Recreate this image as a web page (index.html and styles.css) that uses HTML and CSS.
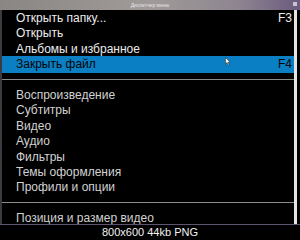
FILE: index.html
```html
<!DOCTYPE html>
<html lang="ru">
  <head>
    <meta charset="UTF-8" />
    <title>Диспетчер меню</title>
    <link rel="stylesheet" href="styles.css">
  </head>
  <body>
    <div class="window">
      <div class="titlebar">
        <span class="title">Диспетчер меню</span>
        <span class="titleBtn"></span>
      </div>
      <div class="content">
        <ul class="menu">
          <li class="item top"><span>Открыть папку...</span><span class="key">F3</span></li>
          <li class="item top"><span>Открыть</span></li>
          <li class="item top"><span>Альбомы и избранное</span></li>
          <li class="item active"><span>Закрыть файл</span><span class="key">F4</span></li>
          <li class="sep"></li>
          <li class="item"><span>Воспроизведение</span></li>
          <li class="item"><span>Субтитры</span></li>
          <li class="item"><span>Видео</span></li>
          <li class="item"><span>Аудио</span></li>
          <li class="item"><span>Фильтры</span></li>
          <li class="item"><span>Темы оформления</span></li>
          <li class="item"><span>Профили и опции</span></li>
          <li class="sep"></li>
          <li class="item"><span>Позиция и размер видео</span></li>
        </ul>
        <div class="scrollbar"></div>
      </div>
      <svg class="cursor" width="6" height="9" viewBox="0 0 6 9">
        <path d="M0.5 0.5 L0.5 7 L2 5.6 L3.2 8.2 L4.2 7.7 L3 5.2 L5.2 5.2 Z" fill="#fff" stroke="#333" stroke-width="0.6"/>
      </svg>
    </div>
    <div class="caption">800x600 44kb PNG</div>
  </body>
</html>
```

FILE: styles.css
```css
body {
  margin: 0;
  background-color: #000;
  font-family: "Liberation Sans", Arial, sans-serif;
  width: 300px;
  height: 240px;
  overflow: hidden;
}

.window {
  position: relative;
  height: 225px;
  border-bottom: 1px solid #5e5470;
  box-sizing: border-box;
  display: flex;
  flex-direction: column;
}

.titlebar {
  height: 10px;
  flex: none;
  display: flex;
  justify-content: center;
  align-items: center;
  background: linear-gradient(to right, #8a8683 0%, #a09b98 50%, #8d8490 80%, #6a5a7e 100%);
  position: relative;
}

.title {
  font-size: 5px;
  color: #e6e4ea;
  line-height: 10px;
}

.titleBtn {
  position: absolute;
  right: 3px;
  top: 2px;
  width: 4px;
  height: 4px;
  background-color: #c9c3d4;
}

.content {
  flex: 1;
  display: flex;
  min-height: 0;
  border-left: 2px solid #3c3a40;
}

.menu {
  flex: 1;
  list-style: none;
  margin: 0;
  padding: 1px 0 0;
  overflow: hidden;
}

.item {
  height: 15.4px;
  line-height: 15.4px;
  padding: 0 2px 0 14px;
  display: flex;
  justify-content: space-between;
  font-size: 12px;
  color: #d2d2d2;
  white-space: nowrap;
}

.item.top {
  color: #ececec;
}

.item.active {
  margin-top: -1px;
  height: 16.4px;
  line-height: 17.4px;
  background-color: #0a7fc4;
  color: #050505;
}

.sep {
  height: 15.4px;
  display: flex;
  align-items: center;
}

.sep::before {
  content: "";
  flex: 1;
  height: 1px;
  margin-top: -1px;
  background-color: #8c8c8c;
}

.scrollbar {
  width: 3px;
  flex: none;
  margin-right: 3px;
  background-color: #e4e4e6;
}

.cursor {
  position: absolute;
  left: 225px;
  top: 57px;
}

.caption {
  height: 15px;
  line-height: 15px;
  text-align: center;
  font-size: 11px;
  color: #f2f2f2;
}
```
